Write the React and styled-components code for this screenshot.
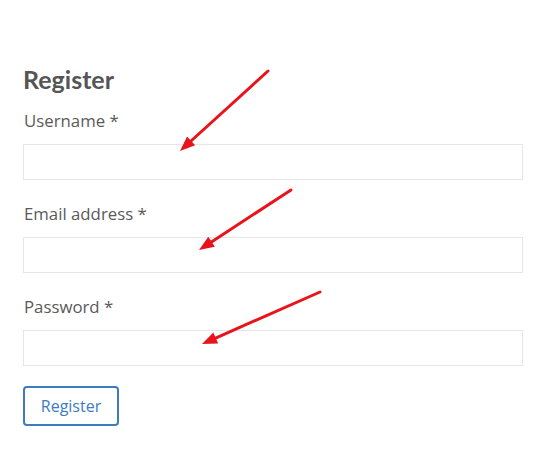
import React from "react";
import styled, { createGlobalStyle } from "styled-components";

const Global = createGlobalStyle`
  html, body { margin: 0; padding: 0; background: #ffffff; }
  body { font-family: "Open Sans", Lato, sans-serif; }
`;

const Page = styled.div`
  position: relative;
  width: 534px;
  height: 454px;
  box-sizing: border-box;
  padding: 65px 11px 0 23px;
  overflow: hidden;
`;

const Heading = styled.h2`
  margin: 0 0 15px;
  font-family: Lato, sans-serif;
  font-weight: 700;
  font-size: 25px;
  line-height: 29px;
  color: #555555;
`;

const Form = styled.form`
  display: flex;
  flex-direction: column;
  gap: 22px;
`;

const Field = styled.div`
  display: flex;
  flex-direction: column;
  gap: 11px;
`;

const Label = styled.label`
  font-family: "Open Sans", sans-serif;
  font-size: 16.8px;
  line-height: 24px;
  color: #5a5a5a;
  padding-left: 1px;
`;

const Input = styled.input`
  box-sizing: border-box;
  width: 500px;
  height: 36px;
  margin: 0;
  border: 1px solid #e6e6e6;
  border-radius: 0;
  background: #ffffff;
  outline: none;
`;

const Button = styled.button`
  align-self: flex-start;
  margin-top: -2px;
  box-sizing: border-box;
  height: 40px;
  width: 96px;
  padding: 0;
  border: 2px solid #3d7cc0;
  border-radius: 4px;
  background: #ffffff;
  color: #3d7cc0;
  font-family: "Open Sans", sans-serif;
  font-size: 16px;
  cursor: pointer;
`;

const Overlay = styled.svg`
  position: absolute;
  inset: 0;
  pointer-events: none;
`;

const arrows = [
  { x1: 268, y1: 71, x2: 180, y2: 151 },
  { x1: 291, y1: 190, x2: 199, y2: 250 },
  { x1: 320, y1: 292, x2: 202, y2: 344 },
];

function Arrow({ x1, y1, x2, y2 }) {
  const dx = x2 - x1;
  const dy = y2 - y1;
  const len = Math.hypot(dx, dy);
  const ux = dx / len;
  const uy = dy / len;
  const headLen = 15;
  const headW = 6;
  const bx = x2 - ux * headLen;
  const by = y2 - uy * headLen;
  const px = -uy;
  const py = ux;
  const pts = `${x2},${y2} ${bx + px * headW},${by + py * headW} ${bx - px * headW},${by - py * headW}`;
  return (
    <g>
      <line x1={x1} y1={y1} x2={bx + ux * 2} y2={by + uy * 2} stroke="#e8141b" strokeWidth="3" strokeLinecap="round" />
      <polygon points={pts} fill="#e8141b" />
    </g>
  );
}

export default function App() {
  return (
    <>
      <Global />
      <Page>
        <Heading>Register</Heading>
        <Form onSubmit={(e) => e.preventDefault()}>
          <Field>
            <Label>Username *</Label>
            <Input type="text" />
          </Field>
          <Field>
            <Label>Email address *</Label>
            <Input type="email" />
          </Field>
          <Field>
            <Label>Password *</Label>
            <Input type="password" />
          </Field>
          <Button type="submit">Register</Button>
        </Form>
        <Overlay width="534" height="454" viewBox="0 0 534 454">
          {arrows.map((a, i) => (
            <Arrow key={i} {...a} />
          ))}
        </Overlay>
      </Page>
    </>
  );
}
